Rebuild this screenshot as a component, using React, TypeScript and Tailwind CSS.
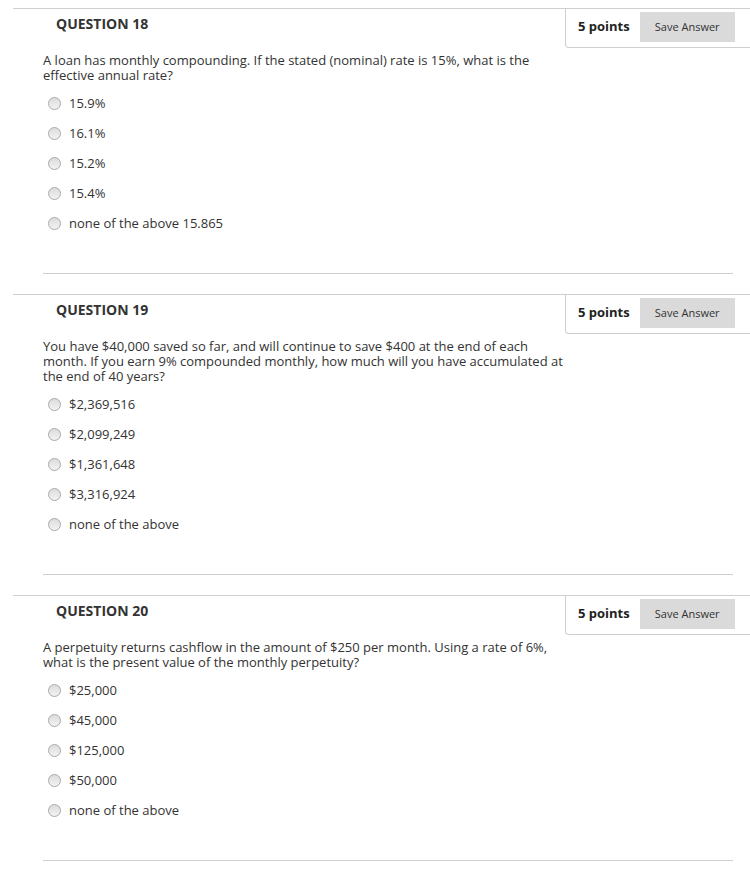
import React from "react";

type Q = { n: number; text: string[]; options: string[] };

const questions: Q[] = [
  {
    n: 18,
    text: [
      "A loan has monthly compounding. If the stated (nominal) rate is 15%, what is the",
      "effective annual rate?",
    ],
    options: ["15.9%", "16.1%", "15.2%", "15.4%", "none of the above 15.865"],
  },
  {
    n: 19,
    text: [
      "You have $40,000 saved so far, and will continue to save $400 at the end of each",
      "month. If you earn 9% compounded monthly, how much will you have accumulated at",
      "the end of 40 years?",
    ],
    options: ["$2,369,516", "$2,099,249", "$1,361,648", "$3,316,924", "none of the above"],
  },
  {
    n: 20,
    text: [
      "A perpetuity returns cashflow in the amount of $250 per month. Using a rate of 6%,",
      "what is the present value of the monthly perpetuity?",
    ],
    options: ["$25,000", "$45,000", "$125,000", "$50,000", "none of the above"],
  },
];

function Radio() {
  return (
    <span className="inline-block w-[13px] h-[13px] rounded-full border border-[#a9a9a9] bg-gradient-to-b from-[#dcdcdc] to-[#f3f3f3] ml-[5px] mr-[8px] shrink-0" />
  );
}

function Question({ q }: { q: Q }) {
  return (
    <div className="ml-[13px] border-t border-[#cfcfcf] mb-[20px]">
      <div className="flex justify-between h-[39px]">
        <h3 className="pl-[43px] pt-[5px] text-[14px] leading-[19px] font-bold text-[#333]">
          QUESTION {q.n}
        </h3>
        <div className="w-[185px] border-l border-b border-[#cfcfcf] rounded-bl-[4px] flex items-center pl-[12px] pb-[2px] gap-[10px]">
          <span className="text-[13px] font-bold text-[#222]">5 points</span>
          <button className="w-[95px] h-[30px] bg-[#dadada] text-[11px] text-[#333]">
            Save Answer
          </button>
        </div>
      </div>
      <div className="pl-[30px] pr-[17px]">
        <div className="mt-[5px] mb-[5px] text-[13px] leading-[15px] text-[#333]">
          {q.text.map((t, i) => (
            <div key={i} className="h-[15px] whitespace-nowrap">
              {t}
            </div>
          ))}
        </div>
        {q.options.map((o) => (
          <div key={o} className="h-[30px] flex items-center text-[13px] leading-[15px] text-[#333]">
            <Radio />
            <span>{o}</span>
          </div>
        ))}
        <div className="mt-[35px] border-t border-[#cfcfcf]" />
      </div>
    </div>
  );
}

export default function App() {
  return (
    <div
      className="w-[750px] min-h-[870px] bg-white pt-[8px]"
      style={{ fontFamily: '"Open Sans", "Liberation Sans", sans-serif' }}
    >
      {questions.map((q) => (
        <Question key={q.n} q={q} />
      ))}
    </div>
  );
}
